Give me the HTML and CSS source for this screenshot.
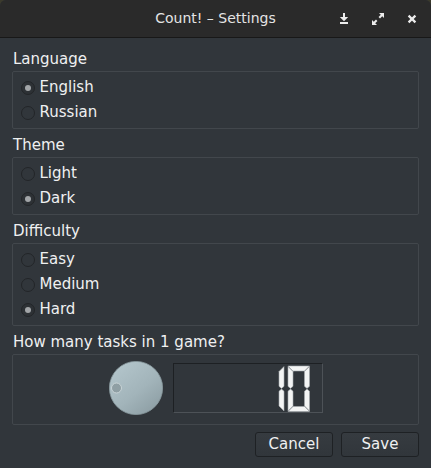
FILE: index.html
```html
<!DOCTYPE html>
<html>
<head>
<meta charset="utf-8">
<title>Count! – Settings</title>
<link rel="stylesheet" href="styles.css">
</head>
<body>
<div class="window">
  <header class="titlebar">
    <div class="tb-left"></div>
    <div class="title">Count! – Settings</div>
    <div class="tb-right">
      <span class="tb-btn">
        <svg class="tb-icon" width="34" height="37" viewBox="0 0 34 37">
          <rect x="16" y="13" width="2" height="4.5" fill="#ececec"/>
          <polygon points="12.8,17 21.2,17 17,21.3" fill="#ececec"/>
          <rect x="13" y="22" width="8" height="2" fill="#ececec"/>
        </svg>
      </span>
      <span class="tb-btn">
        <svg class="tb-icon" width="34" height="37" viewBox="0 0 34 37">
          <polygon points="18,13 23,13 23,18" fill="#ececec"/>
          <line x1="22" y1="14" x2="18.3" y2="17.7" stroke="#ececec" stroke-width="2"/>
          <polygon points="11,20 11,25 16,25" fill="#ececec"/>
          <line x1="12" y1="24" x2="15.7" y2="20.3" stroke="#ececec" stroke-width="2"/>
        </svg>
      </span>
      <span class="tb-btn">
        <svg class="tb-icon" width="34" height="37" viewBox="0 0 34 37">
          <line x1="13.6" y1="15.6" x2="20.4" y2="22.4" stroke="#ececec" stroke-width="2.2"/>
          <line x1="20.4" y1="15.6" x2="13.6" y2="22.4" stroke="#ececec" stroke-width="2.2"/>
        </svg>
      </span>
    </div>
  </header>

  <main class="content">
    <div class="label">Language</div>
    <div class="group">
      <div class="radio checked"><span class="ind"></span><span class="rtext">English</span></div>
      <div class="radio"><span class="ind"></span><span class="rtext">Russian</span></div>
    </div>

    <div class="label">Theme</div>
    <div class="group">
      <div class="radio"><span class="ind"></span><span class="rtext">Light</span></div>
      <div class="radio checked"><span class="ind"></span><span class="rtext">Dark</span></div>
    </div>

    <div class="label">Difficulty</div>
    <div class="group">
      <div class="radio"><span class="ind"></span><span class="rtext">Easy</span></div>
      <div class="radio"><span class="ind"></span><span class="rtext">Medium</span></div>
      <div class="radio checked"><span class="ind"></span><span class="rtext">Hard</span></div>
    </div>

    <div class="label">How many tasks in 1 game?</div>
    <div class="group spin">
      <svg class="dial" width="54" height="54" viewBox="0 0 54 54">
        <defs>
          <linearGradient id="dg" x1="0.15" y1="0.1" x2="0.85" y2="0.95">
            <stop offset="0" stop-color="#b2c4ca"/>
            <stop offset="0.55" stop-color="#a2b4ba"/>
            <stop offset="1" stop-color="#8d9ea4"/>
          </linearGradient>
        </defs>
        <circle cx="27" cy="27" r="26.6" fill="url(#dg)" stroke="#8a9aa0" stroke-width="0.8"/>
        <circle cx="7.5" cy="27" r="5" fill="#8f9fa4" stroke="#c9d4d7" stroke-width="1"/>
      </svg>
      <div class="lcd" role="img" aria-label="10">
        <svg width="148" height="48" viewBox="0 0 148 48">
          <g class="seg">
            <!-- digit 1 : segments b, c -->
            <polygon points="110,2.6 105,7.6 105,22.3 107.5,24.4 110,22.3"/>
            <polygon points="110,46.9 105,41.9 105,27.2 107.5,25.1 110,27.2"/>
            <!-- digit 0 : segments a, b, c, d, e, f -->
            <polygon points="114,2 135.5,2 130.5,7 119,7"/>
            <polygon points="135.5,2.6 130.5,7.6 130.5,22.3 133,24.4 135.5,22.3"/>
            <polygon points="135.5,46.9 130.5,41.9 130.5,27.2 133,25.1 135.5,27.2"/>
            <polygon points="114,47.5 135.5,47.5 130.5,42.5 119,42.5"/>
            <polygon points="114,46.9 119,41.9 119,27.2 116.5,25.1 114,27.2"/>
            <polygon points="114,2.6 119,7.6 119,22.3 116.5,24.4 114,22.3"/>
          </g>
        </svg>
      </div>
    </div>

    <div class="buttons">
      <button class="btn">Cancel</button>
      <button class="btn">Save</button>
    </div>
  </main>
</div>
</body>
</html>
```

FILE: styles.css
```css
html, body {
  margin: 0;
  padding: 0;
}
html {
  background: #3b3a2c;
}
body {
  width: 431px;
  height: 468px;
  overflow: hidden;
  font-family: "DejaVu Sans", "Liberation Sans", sans-serif;
}
.window {
  width: 431px;
  height: 468px;
  background: #31363b;
  border-radius: 6px 6px 0 0;
  overflow: hidden;
}
.titlebar {
  height: 37px;
  background: #2a2a2a;
  border-bottom: 1px solid #181818;
  display: grid;
  grid-template-columns: 1fr auto 1fr;
  align-items: center;
}
.title {
  font-size: 14px;
  line-height: 37px;
  color: #e4e4e4;
  white-space: nowrap;
}
.tb-right {
  display: flex;
  justify-content: flex-end;
  padding-right: 2px;
}
.tb-btn {
  width: 34px;
  height: 37px;
  display: block;
}
.tb-icon {
  display: block;
}
.content {
  padding: 12px 12px 0;
}
.label {
  font-size: 15px;
  line-height: 18px;
  height: 18px;
  color: #eff0f1;
  padding-left: 1px;
  margin-bottom: 3px;
  white-space: nowrap;
}
.group {
  border: 1px solid #42474c;
  border-radius: 2px;
  padding: 3px 0;
  margin-bottom: 7px;
}
.radio {
  display: flex;
  align-items: center;
  height: 25px;
  padding-left: 8px;
  font-size: 15px;
  line-height: 25px;
  color: #eff0f1;
}
.ind {
  width: 14px;
  height: 14px;
  box-sizing: border-box;
  border: 1px solid #222528;
  border-radius: 50%;
  margin-right: 4.5px;
  display: flex;
  align-items: center;
  justify-content: center;
  flex: none;
}
.checked .ind {
  background: #2d3135;
}
.checked .ind::after {
  content: "";
  width: 6px;
  height: 6px;
  border-radius: 50%;
  background: #a2a5a8;
}
.spin {
  display: flex;
  justify-content: center;
  align-items: center;
  gap: 10px;
  padding: 8px 0 11px 1px;
  margin-bottom: 0;
}
.dial {
  display: block;
  flex: none;
  margin: -2px 0;
}
.lcd {
  width: 150px;
  height: 50px;
  box-sizing: border-box;
  border: 1px solid;
  border-color: #1d2023 #4d5257 #4d5257 #1d2023;
  flex: none;
}
.lcd svg {
  display: block;
}
.seg polygon {
  fill: #f3f4f4;
  stroke: #a6abae;
  stroke-width: 0.6;
}
.buttons {
  display: flex;
  justify-content: flex-end;
  gap: 8px;
  margin-top: 7px;
}
.btn {
  width: 78px;
  height: 25px;
  box-sizing: border-box;
  border: 1px solid #1e2124;
  border-radius: 3px;
  background: linear-gradient(#363b40, #31363b);
  color: #eff0f1;
  font-family: "DejaVu Sans", "Liberation Sans", sans-serif;
  font-size: 15px;
  line-height: 21px;
  padding: 0;
  margin: 0;
}
```
